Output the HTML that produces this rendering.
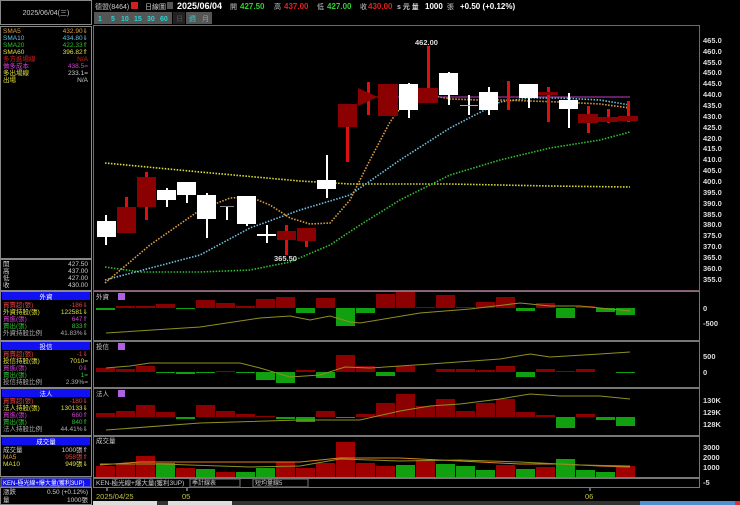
<!DOCTYPE html>
<html><head><meta charset="utf-8"><style>
body{margin:0;background:#000;width:740px;height:505px;overflow:hidden;font-family:"Liberation Sans","Noto Sans CJK TC",sans-serif;}
svg{position:absolute;left:0;top:0}
text{font-family:"Liberation Sans","Noto Sans CJK TC",sans-serif}
</style></head><body>
<svg width="740" height="505" viewBox="0 0 740 505" xmlns="http://www.w3.org/2000/svg">
<rect width="740" height="505" fill="#000"/>
<!-- left panel -->
<g stroke="#888" fill="none" stroke-width="1">
<rect x="0.5" y="0.5" width="91" height="24"/>
<rect x="0.5" y="26.5" width="91" height="232"/>
<rect x="0.5" y="259.5" width="91" height="31"/>
<rect x="0.5" y="291.5" width="91" height="49"/>
<rect x="0.5" y="341.5" width="91" height="46"/>
<rect x="0.5" y="388.5" width="91" height="47"/>
<rect x="0.5" y="436.5" width="91" height="40"/>
<rect x="0.5" y="487.5" width="91" height="17"/>
</g>
<text x="46" y="15" fill="#ccc" font-size="7" text-anchor="middle">2025/06/04(三)</text>
<g font-size="6.5">
<text x="3" y="33" fill="#e0a040">SMA5</text><text x="88" y="33" fill="#e0a040" text-anchor="end">432.90⇓</text>
<text x="3" y="40" fill="#60c0e0">SMA10</text><text x="88" y="40" fill="#60c0e0" text-anchor="end">434.80⇓</text>
<text x="3" y="47" fill="#30c030">SMA20</text><text x="88" y="47" fill="#30c030" text-anchor="end">422.33⇑</text>
<text x="3" y="54" fill="#e0e040">SMA60</text><text x="88" y="54" fill="#e0e040" text-anchor="end">396.82⇑</text>
<text x="3" y="61" fill="#d02020">多方進場線</text><text x="88" y="61" fill="#d02020" text-anchor="end">N/A</text>
<text x="3" y="68" fill="#d040d0">做多成本</text><text x="88" y="68" fill="#d040d0" text-anchor="end">438.5=</text>
<text x="3" y="75" fill="#e0e040">多出場線</text><text x="88" y="75" fill="#ccc" text-anchor="end">233.1=</text>
<text x="3" y="82" fill="#e0e040">出場</text><text x="88" y="82" fill="#ccc" text-anchor="end">N/A</text>
<g fill="#ccc"><text x="3" y="266">開</text><text x="88" y="266" text-anchor="end">427.50</text>
<text x="3" y="273">高</text><text x="88" y="273" text-anchor="end">437.00</text>
<text x="3" y="280">低</text><text x="88" y="280" text-anchor="end">427.00</text>
<text x="3" y="287">收</text><text x="88" y="287" text-anchor="end">430.00</text></g>
</g>
<g font-size="6.5">
<rect x="2" y="292" width="88" height="8" fill="#1010f0"/><text x="46" y="299" fill="#fff" text-anchor="middle">外資</text>
<text x="3" y="307" fill="#e04040">買賣超(張)</text><text x="88" y="307" fill="#e04040" text-anchor="end">-186⇓</text>
<text x="3" y="314" fill="#e0e040">外資持股(張)</text><text x="88" y="314" fill="#e0e040" text-anchor="end">122581⇓</text>
<text x="3" y="321" fill="#d040d0">買進(張)</text><text x="88" y="321" fill="#d040d0" text-anchor="end">647⇑</text>
<text x="3" y="328" fill="#30c030">賣出(張)</text><text x="88" y="328" fill="#30c030" text-anchor="end">833⇑</text>
<text x="3" y="335" fill="#aaa">外資持股比例</text><text x="88" y="335" fill="#aaa" text-anchor="end">41.83%⇓</text>
<rect x="2" y="342" width="88" height="8" fill="#1010f0"/><text x="46" y="349" fill="#fff" text-anchor="middle">投信</text>
<text x="3" y="356" fill="#e04040">買賣超(張)</text><text x="88" y="356" fill="#e04040" text-anchor="end">-1⇓</text>
<text x="3" y="363" fill="#e0e040">投信持股(張)</text><text x="88" y="363" fill="#e0e040" text-anchor="end">7010=</text>
<text x="3" y="370" fill="#d040d0">買進(張)</text><text x="88" y="370" fill="#d040d0" text-anchor="end">0⇓</text>
<text x="3" y="377" fill="#30c030">賣出(張)</text><text x="88" y="377" fill="#30c030" text-anchor="end">1=</text>
<text x="3" y="384" fill="#aaa">投信持股比例</text><text x="88" y="384" fill="#aaa" text-anchor="end">2.39%=</text>
<rect x="2" y="389" width="88" height="8" fill="#1010f0"/><text x="46" y="396" fill="#fff" text-anchor="middle">法人</text>
<text x="3" y="403" fill="#e04040">買賣超(張)</text><text x="88" y="403" fill="#e04040" text-anchor="end">-180⇓</text>
<text x="3" y="410" fill="#e0e040">法人持股(張)</text><text x="88" y="410" fill="#e0e040" text-anchor="end">130133⇓</text>
<text x="3" y="417" fill="#d040d0">買進(張)</text><text x="88" y="417" fill="#d040d0" text-anchor="end">660⇑</text>
<text x="3" y="424" fill="#30c030">賣出(張)</text><text x="88" y="424" fill="#30c030" text-anchor="end">840⇑</text>
<text x="3" y="431" fill="#aaa">法人持股比例</text><text x="88" y="431" fill="#aaa" text-anchor="end">44.41%⇓</text>
<rect x="2" y="437" width="88" height="8" fill="#1010f0"/><text x="46" y="444" fill="#fff" text-anchor="middle">成交量</text>
<text x="3" y="452" fill="#ccc">成交量</text><text x="88" y="452" fill="#ccc" text-anchor="end">1000張⇑</text>
<text x="3" y="459" fill="#e0a040">MA5</text><text x="88" y="459" fill="#e04040" text-anchor="end">958張⇑</text>
<text x="3" y="466" fill="#e0e040">MA10</text><text x="88" y="466" fill="#e0e040" text-anchor="end">949張⇓</text>
<rect x="1" y="478" width="90" height="9" fill="#1010f0" stroke="#888"/><text x="3" y="485" fill="#fff" font-size="6">KEN-極光線+爆大量(獲利3UP)</text>
<text x="3" y="494" fill="#ccc">漲跌</text><text x="88" y="494" fill="#ccc" text-anchor="end">0.50 (+0.12%)</text>
<text x="3" y="502" fill="#ccc">量</text><text x="88" y="502" fill="#ccc" text-anchor="end">1000張</text>
</g>
<!-- header -->
<g font-size="8" font-weight="bold">
<text x="95" y="9" fill="#ccc" font-weight="normal" font-size="7">德盟(8464)</text>
<rect x="131" y="2" width="7" height="7" fill="#d02020"/>
<text x="145" y="9" fill="#ccc" font-weight="normal" font-size="7">日線圖</text>
<rect x="167" y="2" width="6" height="7" fill="#555"/>
<text x="177" y="9" fill="#fff" font-size="9">2025/06/04</text>
<text x="230" y="9" fill="#ccc" font-size="7" font-weight="normal">開</text><text x="240" y="9" fill="#30d030">427.50</text>
<text x="274" y="9" fill="#ccc" font-size="7" font-weight="normal">高</text><text x="284" y="9" fill="#e02020">437.00</text>
<text x="317" y="9" fill="#ccc" font-size="7" font-weight="normal">低</text><text x="327" y="9" fill="#30d030">427.00</text>
<text x="360" y="9" fill="#ccc" font-size="7" font-weight="normal">收</text><text x="368" y="9" fill="#e02020">430.00</text>
<text x="397" y="9" fill="#ccc" font-size="7">s 元  量</text><text x="425" y="9" fill="#fff">1000</text><text x="447" y="9" fill="#ccc" font-size="7" font-weight="normal">張</text>
<text x="460" y="9" fill="#fff">+0.50 (+0.12%)</text>
</g>
<g font-size="7" font-weight="bold" fill="#30d0d0">
<rect x="94" y="12" width="78" height="12" fill="#555"/>
<rect x="173" y="12" width="12" height="12" fill="#222"/>
<rect x="186" y="12" width="26" height="12" fill="#555"/>
<text x="98" y="21">1</text><text x="111" y="21">5</text><text x="121" y="21">10</text><text x="134" y="21">15</text><text x="147" y="21">30</text><text x="160" y="21">60</text>
<text x="176" y="21" fill="#444">日</text><text x="189" y="21" font-weight="normal">週</text><text x="202" y="21" font-weight="normal">月</text>
</g>
<!-- chart frames -->
<g stroke="#806070" fill="none">
<rect x="93.5" y="25.5" width="606" height="265"/>
</g>
<g stroke="#777" fill="none">
<rect x="93.5" y="291.5" width="606" height="49"/>
<rect x="93.5" y="341.5" width="606" height="46"/>
<rect x="93.5" y="388.5" width="606" height="47"/>
<rect x="93.5" y="436.5" width="606" height="41"/>
<rect x="93.5" y="478.5" width="606" height="9"/>
</g>
<!-- price axis -->
<g font-size="7.5" fill="#ddd" font-weight="bold">
<text x="703" y="43">465.0</text><text x="703" y="54">460.0</text><text x="703" y="65">455.0</text><text x="703" y="75">450.0</text><text x="703" y="86">445.0</text><text x="703" y="97">440.0</text><text x="703" y="108">435.0</text><text x="703" y="119">430.0</text><text x="703" y="130">425.0</text><text x="703" y="141">420.0</text><text x="703" y="151">415.0</text><text x="703" y="162">410.0</text><text x="703" y="173">405.0</text><text x="703" y="184">400.0</text><text x="703" y="195">395.0</text><text x="703" y="206">390.0</text><text x="703" y="217">385.0</text><text x="703" y="227">380.0</text><text x="703" y="238">375.0</text><text x="703" y="249">370.0</text><text x="703" y="260">365.0</text><text x="703" y="271">360.0</text><text x="703" y="282">355.0</text>
<text x="703" y="311">0</text><text x="703" y="326">-500</text>
<text x="703" y="359">500</text><text x="703" y="375">0</text>
<text x="703" y="403">130K</text><text x="703" y="415">129K</text><text x="703" y="427">128K</text>
<text x="703" y="450">3000</text><text x="703" y="460">2000</text><text x="703" y="470">1000</text>
<text x="703" y="485">-5</text>
</g>
<!-- MA lines -->
<g fill="none" stroke-width="1.6" stroke-dasharray="1.5 1.5">
<polyline stroke="#e0e030" points="105,163 200,172 300,181 350,184 450,184 550,186 630,187"/>
<polyline stroke="#30c030" points="105,267 140,272 200,272 250,270 290,262 330,245 360,225 400,200 450,175 500,160 550,148 600,140 630,132"/>
<polyline stroke="#70c0e0" points="105,280 200,255 250,228 300,210 350,195 400,160 450,128 500,102 530,98 560,98 600,100 630,105"/>
<polyline stroke="#e0a040" points="105,283 150,245 200,210 230,198 250,197 270,205 290,218 310,224 330,223 350,200 370,160 390,122 410,95 430,95 450,99 480,100 500,100 530,101 560,102 600,104 630,108"/>
</g>
<line x1="370" y1="97" x2="630" y2="97" stroke="#c040c0" stroke-width="1"/>
<!-- candles -->
<g fill="#fff" stroke="none">
<rect x="105" y="215" width="2" height="30"/><rect x="97" y="221" width="19" height="16"/>
<rect x="166" y="188" width="2" height="19"/><rect x="157" y="190" width="19" height="10"/>
<rect x="186" y="182" width="2" height="21"/><rect x="177" y="182" width="19" height="13"/>
<rect x="206" y="193" width="2" height="45"/><rect x="197" y="195" width="19" height="24"/>
<rect x="226" y="207" width="2" height="13"/><rect x="220" y="206" width="14" height="1" fill="#888"/>
<rect x="246" y="196" width="2" height="30"/><rect x="237" y="196" width="19" height="28"/>
<rect x="266" y="225" width="2" height="18"/><rect x="257" y="234" width="19" height="2"/>
<rect x="326" y="155" width="2" height="43"/><rect x="317" y="180" width="19" height="9"/>
<rect x="408" y="83" width="2" height="35"/><rect x="399" y="84" width="19" height="26"/>
<rect x="448" y="72" width="2" height="33"/><rect x="439" y="73" width="19" height="22"/>
<rect x="468" y="95" width="2" height="20"/><rect x="460" y="105" width="18" height="1" fill="#aaa"/>
<rect x="488" y="87" width="2" height="28"/><rect x="479" y="92" width="19" height="18"/>
<rect x="528" y="84" width="2" height="24"/><rect x="519" y="84" width="19" height="14"/>
<rect x="568" y="93" width="2" height="35"/><rect x="559" y="100" width="19" height="9"/>
</g>
<g fill="#e01010">
<rect x="125" y="197" width="3" height="36"/>
<rect x="145" y="172" width="3" height="48"/>
<rect x="285" y="225" width="3" height="30"/>
<rect x="305" y="228" width="3" height="19"/>
<rect x="346" y="104" width="3" height="58"/>
<rect x="367" y="82" width="3" height="33"/>
<rect x="427" y="46" width="3" height="56"/>
<rect x="507" y="81" width="3" height="29"/>
<rect x="547" y="87" width="3" height="35"/>
<rect x="587" y="106" width="3" height="27"/>
<rect x="607" y="109" width="3" height="14"/>
<rect x="627" y="101" width="3" height="21"/>
</g>
<g fill="#8b0000">
<rect x="117" y="207" width="19" height="26"/>
<rect x="137" y="177" width="19" height="30"/>
<rect x="277" y="231" width="19" height="9"/>
<rect x="297" y="228" width="19" height="13"/>
<rect x="338" y="104" width="19" height="23"/>
<polygon points="358,88 378,97 358,106"/>
<rect x="378" y="84" width="20" height="32"/>
<rect x="418" y="88" width="20" height="15"/>
<rect x="538" y="92" width="20" height="3"/>
<rect x="578" y="114" width="20" height="9"/>
<rect x="598" y="117" width="20" height="5"/>
<rect x="618" y="116" width="20" height="5"/>
</g>
<text x="415" y="45" fill="#ddd" font-size="7.5" font-weight="bold">462.00</text>
<text x="274" y="261" fill="#ddd" font-size="7.5" font-weight="bold">365.50</text>
<!-- panel labels -->
<g font-size="6.5" fill="#ccc">
<text x="96" y="299">外資</text><rect x="118" y="293" width="7" height="7" fill="#b060e0"/>
<text x="96" y="349">投信</text><rect x="118" y="343" width="7" height="7" fill="#b060e0"/>
<text x="96" y="396">法人</text><rect x="118" y="390" width="7" height="7" fill="#b060e0"/>
<text x="96" y="443">成交量</text>
<text x="96" y="485">KEN-極光線+爆大量(獲利3UP)</text>
</g>
<rect x="190" y="479" width="50" height="8" fill="#000" stroke="#777"/><text x="192" y="485" font-size="6" fill="#ccc">季計線表</text>
<rect x="253" y="479" width="55" height="8" fill="#000" stroke="#777"/><text x="255" y="485" font-size="6" fill="#ccc">短均量線5</text>
<!-- panel1 -->
<g fill="#8b0000">
<rect x="116" y="306" width="19" height="2"/><rect x="136" y="306" width="19" height="2"/><rect x="156" y="304" width="19" height="4"/><rect x="196" y="300" width="19" height="8"/><rect x="216" y="303" width="19" height="5"/><rect x="236" y="306" width="19" height="2"/><rect x="256" y="299" width="19" height="9"/><rect x="276" y="297" width="19" height="11"/><rect x="316" y="298" width="19" height="10"/><rect x="376" y="294" width="19" height="14"/><rect x="396" y="292" width="19" height="16"/><rect x="416" y="307" width="19" height="1"/><rect x="436" y="295" width="19" height="13"/><rect x="456" y="307" width="19" height="1"/><rect x="476" y="302" width="19" height="6"/><rect x="496" y="297" width="19" height="11"/><rect x="536" y="303" width="19" height="5"/><rect x="576" y="306" width="19" height="2"/>
</g>
<g fill="#10a010">
<rect x="96" y="308" width="19" height="2"/><rect x="176" y="308" width="19" height="1"/><rect x="296" y="308" width="19" height="5"/><rect x="336" y="308" width="19" height="18"/><rect x="356" y="308" width="19" height="5"/><rect x="516" y="308" width="19" height="3"/><rect x="556" y="308" width="19" height="10"/><rect x="596" y="308" width="19" height="4"/><rect x="616" y="308" width="19" height="7"/>
</g>
<polyline fill="none" stroke="#909020" points="106,333 200,327 260,318 290,316 310,320 330,316 350,322 360,323 420,313 470,309 520,303 550,306 580,306 630,311"/>
<!-- panel2 -->
<g fill="#8b0000">
<rect x="96" y="368" width="19" height="4"/><rect x="116" y="369" width="19" height="3"/><rect x="136" y="366" width="19" height="6"/><rect x="216" y="371" width="19" height="1"/><rect x="296" y="370" width="19" height="2"/><rect x="336" y="355" width="19" height="17"/><rect x="356" y="366" width="19" height="6"/><rect x="396" y="366" width="19" height="6"/><rect x="436" y="369" width="19" height="3"/><rect x="456" y="369" width="19" height="3"/><rect x="476" y="370" width="19" height="2"/><rect x="496" y="366" width="19" height="6"/><rect x="536" y="369" width="19" height="3"/><rect x="556" y="371" width="19" height="1"/><rect x="576" y="369" width="19" height="3"/>
</g>
<g fill="#10a010">
<rect x="156" y="372" width="19" height="1"/><rect x="176" y="372" width="19" height="2"/><rect x="196" y="372" width="19" height="1"/><rect x="236" y="372" width="19" height="1"/><rect x="256" y="372" width="19" height="8"/><rect x="276" y="372" width="19" height="11"/><rect x="316" y="372" width="19" height="6"/><rect x="376" y="372" width="19" height="4"/><rect x="516" y="372" width="19" height="5"/><rect x="616" y="372" width="19" height="1"/>
</g>
<polyline fill="none" stroke="#909020" points="106,368 130,366 150,363 240,363 260,368 290,377 320,375 345,367 370,368 400,366 430,364 500,359 530,354 550,357 600,354 630,352"/>
<!-- panel3 -->
<g fill="#8b0000">
<rect x="96" y="413" width="19" height="4"/><rect x="116" y="411" width="19" height="6"/><rect x="136" y="405" width="19" height="12"/><rect x="156" y="412" width="19" height="5"/><rect x="196" y="405" width="19" height="12"/><rect x="216" y="411" width="19" height="6"/><rect x="236" y="414" width="19" height="3"/><rect x="256" y="416" width="19" height="1"/><rect x="316" y="411" width="19" height="6"/><rect x="356" y="414" width="19" height="3"/><rect x="376" y="403" width="19" height="14"/><rect x="396" y="394" width="19" height="23"/><rect x="416" y="406" width="19" height="11"/><rect x="436" y="399" width="19" height="18"/><rect x="456" y="411" width="19" height="6"/><rect x="476" y="403" width="19" height="14"/><rect x="496" y="399" width="19" height="18"/><rect x="516" y="412" width="19" height="5"/><rect x="536" y="415" width="19" height="2"/><rect x="576" y="414" width="19" height="3"/>
</g>
<g fill="#10a010">
<rect x="176" y="417" width="19" height="2"/><rect x="276" y="417" width="19" height="2"/><rect x="296" y="417" width="19" height="5"/><rect x="336" y="417" width="19" height="1"/><rect x="556" y="417" width="19" height="11"/><rect x="596" y="417" width="19" height="3"/><rect x="616" y="417" width="19" height="9"/>
</g>
<polyline fill="none" stroke="#909020" points="106,430 200,423 300,420 360,420 400,411 430,406 460,404 500,399 530,394 560,396 600,396 630,399"/>
<!-- panel4 volume -->
<g fill="#a00000">
<rect x="96" y="466" width="19" height="11"/><rect x="116" y="464" width="19" height="13"/><rect x="136" y="456" width="19" height="21"/><rect x="176" y="468" width="19" height="9"/><rect x="216" y="472" width="19" height="5"/><rect x="276" y="462" width="19" height="15"/><rect x="296" y="468" width="19" height="9"/><rect x="316" y="463" width="19" height="14"/><rect x="336" y="442" width="19" height="35"/><rect x="356" y="463" width="19" height="14"/><rect x="376" y="466" width="19" height="11"/><rect x="416" y="460" width="19" height="17"/><rect x="496" y="465" width="19" height="12"/><rect x="536" y="467" width="19" height="10"/><rect x="616" y="466" width="19" height="11"/>
</g>
<g fill="#10a010">
<rect x="156" y="463" width="19" height="14"/><rect x="196" y="469" width="19" height="8"/><rect x="236" y="472" width="19" height="5"/><rect x="256" y="468" width="19" height="9"/><rect x="396" y="465" width="19" height="12"/><rect x="436" y="464" width="19" height="13"/><rect x="456" y="466" width="19" height="11"/><rect x="476" y="470" width="19" height="7"/><rect x="516" y="469" width="19" height="8"/><rect x="556" y="459" width="19" height="18"/><rect x="576" y="470" width="19" height="7"/><rect x="596" y="472" width="19" height="5"/>
</g>
<polyline fill="none" stroke="#e08020" points="100,465 140,462 200,462 260,462 300,462 340,458 400,458 460,461 520,464 560,464 600,466 630,467"/>
<polyline fill="none" stroke="#909020" points="100,464 160,464 250,467 300,466 340,459 400,461 460,460 520,462 580,465 630,466"/>
<!-- dates -->
<g font-size="7.5" fill="#c0c040">
<line x1="107" y1="488" x2="107" y2="491" stroke="#ccc"/>
<text x="96" y="499">2025/04/25</text>
<line x1="187" y1="488" x2="187" y2="491" stroke="#ccc"/>
<text x="182" y="499">05</text>
<line x1="590" y1="488" x2="590" y2="491" stroke="#ccc"/>
<text x="585" y="499">06</text>
</g>
<rect x="93" y="501" width="647" height="4" fill="#333"/>
<rect x="93" y="501" width="64" height="4" fill="#ddd"/>
<rect x="168" y="501" width="64" height="4" fill="#ddd"/>
<rect x="640" y="501" width="95" height="4" fill="#5090d0"/>
<rect x="735" y="501" width="5" height="4" fill="#e03030"/>
</svg>
</body></html>
